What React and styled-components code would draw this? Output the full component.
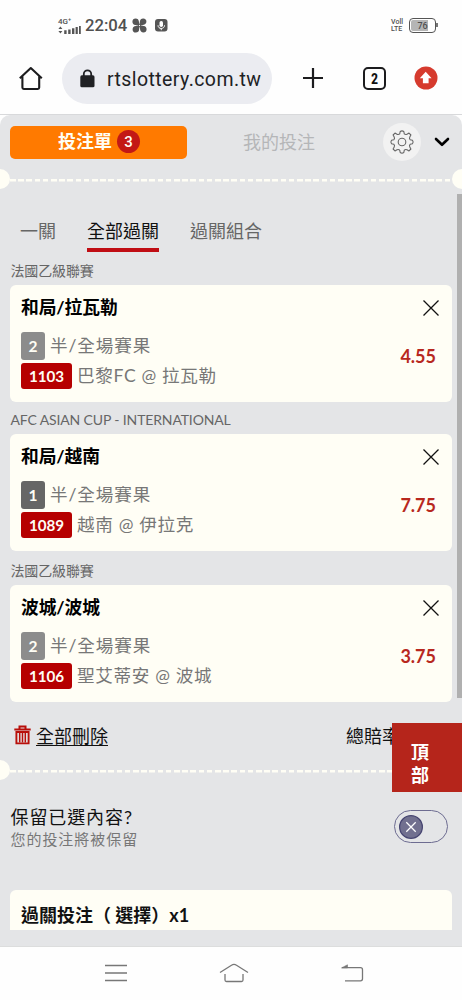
import React from "react";
import styled, { createGlobalStyle } from "styled-components";

const bets = [
  {
    league: "法國乙級聯賽",
    pick: "和局/拉瓦勒",
    leg: "2",
    code: "1103",
    match: "巴黎FC @ 拉瓦勒",
    odds: "4.55",
    gap: 28
  },
  {
    league: "AFC ASIAN CUP - INTERNATIONAL",
    pick: "和局/越南",
    leg: "1",
    dark: true,
    code: "1089",
    match: "越南 @ 伊拉克",
    odds: "7.75",
    gap: 32
  },
  {
    league: "法國乙級聯賽",
    pick: "波城/波城",
    leg: "2",
    code: "1106",
    match: "聖艾蒂安 @ 波城",
    odds: "3.75",
    gap: 34
  }
];

const StatusIcons = () => (
  <Status>
    <Signal>
      <span>4G⁺</span>
      <svg width="24" height="8" viewBox="0 0 24 8" fill="#555">
        <path d="M.4 3L2.4 .6L4.4 3zM.4 5L2.4 7.4L4.4 5z" />
        <path d="M6.2 4.2h2.4V8H6.2zM10.2 3.4h2.4V8h-2.4zM14 2.2h2.4V8H14zM17.6 .9h2.2V8h-2.2zM21 0h1.8v8H21z" />
      </svg>
    </Signal>
    <Clock>22:04</Clock>
    <svg width="15" height="15" viewBox="0 0 15 15">
      <g fill="#555">
        <path d="M.4 3.8Q.6 .6 3.6 .6Q6.6 .6 7 4Q7.2 6 8.6 6.8Q5.5 7.4 3.2 7.1Q.6 6.8 .4 3.8z" />
        <path d="M11.2 .4Q14.4 .6 14.4 3.6Q14.4 6.6 11 7Q9 7.2 8.2 8.6Q7.6 5.5 7.9 3.2Q8.2 .6 11.2 .4z" />
        <path d="M14.6 11.2Q14.4 14.4 11.4 14.4Q8.4 14.4 8 11Q7.8 9 6.4 8.2Q9.5 7.6 11.8 7.9Q14.4 8.2 14.6 11.2z" />
        <path d="M3.8 14.6Q.6 14.4 .6 11.4Q.6 8.4 4 8Q6 7.8 6.8 6.4Q7.4 9.5 7.1 11.8Q6.8 14.4 3.8 14.6z" />
      </g>
    </svg>
    <MicIcon width="13" height="13" viewBox="0 0 13 13">
      <rect width="12.5" height="12.5" rx="3" fill="#555" />
      <rect x="4.5" y="2" width="3.5" height="6" rx="1.7" fill="#fff" />
      <path d="M3 6.3C3 10.5 9.5 10.5 9.5 6.3M6.25 9.4v1.8" fill="none" stroke="#fff" />
    </MicIcon>
    <Volte>
      <span>Voll</span>
      <span>LTE</span>
    </Volte>
    <Battery>76</Battery>
  </Status>
);

const Toolbar = () => (
  <Bar>
    <svg width="24" height="26" viewBox="0 0 24 26" fill="none" stroke="#1c1c1e" strokeWidth="2.1">
      <path d="M.8 13.2L11.8 3L22.8 13.2M3.4 11V22.6Q3.4 24 4.8 24H18.8Q20.2 24 20.2 22.6V11" strokeLinejoin="round" />
    </svg>
    <Address>
      <svg width="15" height="19" viewBox="0 0 15 19">
        <path d="M3.8 8V5a3.7 3.7 0 0 1 7.4 0v3" fill="none" stroke="#202124" strokeWidth="1.8" />
        <rect x=".3" y="6.3" width="14.2" height="12" rx="1.6" fill="#202124" />
      </svg>
      <span>rtslottery.com.tw</span>
    </Address>
    <svg width="20" height="20" viewBox="0 0 20 20" stroke="#1c1c1e" strokeWidth="2.2">
      <path d="M0 10H20M10 0V20" />
    </svg>
    <TabCount>2</TabCount>
    <svg width="24" height="24" viewBox="0 0 24 24">
      <circle cx="12" cy="12" r="11.5" fill="#d63b2e" />
      <path d="M11.7 5.8L17.6 12.2H14.6V17.2H8.9V12.2H5.8z" fill="#fff" />
    </svg>
  </Bar>
);

const Gear = () => (
  <GearCircle>
    <svg width="26" height="26" viewBox="0 0 26 26" fill="none" stroke="#666" strokeWidth="1.1" strokeLinejoin="round">
      <circle cx="13" cy="13" r="3.8" />
      <path d="M11.2 2.5Q13 1.2 14.8 2.5L15.3 4.9Q16.5 6 18 5.2L20 4.1L21.9 6L20.8 8Q20 9.5 21.1 10.7L23.5 11.2Q24.8 13 23.5 14.8L21.1 15.3Q20 16.5 20.8 18L21.9 20L20 21.9L18 20.8Q16.5 20 15.3 21.1L14.8 23.5Q13 24.8 11.2 23.5L10.7 21.1Q9.5 20 8 20.8L6 21.9L4.1 20L5.2 18Q6 16.5 4.9 15.3L2.5 14.8Q1.2 13 2.5 11.2L4.9 10.7Q6 9.5 5.2 8L4.1 6L6 4.1L8 5.2Q9.5 6 10.7 4.9z" />
    </svg>
  </GearCircle>
);

const Bet = ({ bet }) => (
  <>
    <League $height={bet.gap}>{bet.league}</League>
    <Card>
      <CardHead>
        <span>{bet.pick}</span>
        <svg width="16" height="16" viewBox="0 0 16 16" stroke="#111" strokeWidth="1.3">
          <path d="M.5 .5L15.5 15.5M15.5 .5L.5 15.5" />
        </svg>
      </CardHead>
      <CardBody>
        <div>
          <Line>
            <Leg $dark={bet.dark}>{bet.leg}</Leg>
            <span>半/全場賽果</span>
          </Line>
          <Line $tight>
            <Code>{bet.code}</Code>
            <span>{bet.match}</span>
          </Line>
        </div>
        <Odds>{bet.odds}</Odds>
      </CardBody>
    </Card>
  </>
);

const App = () => {
  return (
    <Phone>
      <GlobalStyle />
      <StatusIcons />
      <Toolbar />
      <Page>
        <Slip>
          <SlipHead>
            <SlipTab>
              投注單<Count>3</Count>
            </SlipTab>
            <MyBets>我的投注</MyBets>
            <Gear />
            <svg width="16" height="10" viewBox="0 0 16 10" fill="none" stroke="#000" strokeWidth="2.6" strokeLinecap="round" strokeLinejoin="round">
              <path d="M2 2L8 7.8L14 2" />
            </svg>
          </SlipHead>
          <Perforation />
          <Tabs>
            <Tab>一關</Tab>
            <Tab $active>全部過關</Tab>
            <Tab>過關組合</Tab>
          </Tabs>
          {bets.map(bet => (
            <Bet key={bet.code} bet={bet} />
          ))}
          <Actions>
            <svg width="17" height="20" viewBox="0 0 17 20" fill="none" stroke="#b80f0a">
              <path d="M.3 4.4H16.7M5.5 3.7V1.5H11.5V3.7" strokeWidth="2" />
              <path d="M2.4 7H14.6V18.4H2.4z" strokeWidth="1.9" />
              <path d="M5.7 7.5V17.5M8.5 7.5V17.5M11.3 7.5V17.5" strokeWidth="1.5" />
            </svg>
            <u>全部刪除</u>
            <Total>總賠率</Total>
          </Actions>
          <Perforation />
          <Keep>
            <div>
              <KeepTitle>保留已選內容?</KeepTitle>
              <KeepNote>您的投注將被保留</KeepNote>
            </div>
            <Switch>
              <svg width="24" height="24" viewBox="0 0 23 23">
                <circle cx="11.5" cy="11.5" r="10.9" fill="#71708f" stroke="#464571" strokeWidth="1.2" />
                <path d="M7 7L16 16M16 7L7 16" stroke="#fff" strokeWidth="1.2" />
              </svg>
            </Switch>
          </Keep>
          <Stake>過關投注（ 選擇）x1</Stake>
          <ScrollThumb />
        </Slip>
        <TopButton>
          頂
          <br />部
        </TopButton>
      </Page>
      <NavBar>
        <svg width="22" height="18" viewBox="0 0 22 18">
          <path d="M0 1.5H22M0 9H22M0 16.5H22" />
        </svg>
        <svg width="30" height="20" viewBox="0 0 30 20">
          <path d="M1 9.5L12.5 2.2Q15 .7 17.5 2.2L29 9.5M6 11V17Q6 18.5 7.5 18.5H22.5Q24 18.5 24 17V11" />
        </svg>
        <svg width="23" height="18" viewBox="0 0 23 18">
          <path d="M1 3.7H19.5Q21.5 3.7 21.5 5.7V14.8Q21.5 16.8 19.5 16.8H4" />
          <path d="M.5 3.9L6.5 .8V3.9z" fill="#777" strokeWidth=".6" />
        </svg>
      </NavBar>
    </Phone>
  );
};

export default App;

const GlobalStyle = createGlobalStyle`
  * {
    box-sizing: border-box;
  }
  body {
    margin: 0;
    background: #fefefe;
  }
  svg {
    display: block;
    flex-shrink: 0;
  }
`;

const Phone = styled.div`
  width: 462px;
  height: 1000px;
  overflow: hidden;
  display: flex;
  flex-direction: column;
  background: #fefefe;
  color: #111;
  font-family: Lato, "Noto Sans CJK TC", sans-serif;
`;

const Status = styled.div`
  height: 51px;
  display: flex;
  align-items: center;
  padding: 0 26px 0 58px;
  font-family: Roboto, sans-serif;
  color: #505050;
`;

const Signal = styled.div`
  display: flex;
  flex-direction: column;
  width: 27px;
  font-size: 8px;
  font-weight: 500;
  line-height: 8px;
`;

const Clock = styled.div`
  width: 47px;
  font-size: 16.7px;
  font-weight: 500;
  line-height: 20px;
`;

const MicIcon = styled.svg`
  margin-left: 8px;
`;

const Volte = styled.div`
  margin-left: auto;
  margin-right: 6px;
  display: flex;
  flex-direction: column;
  font-size: 7px;
  font-weight: 500;
  line-height: 7px;
`;

const Battery = styled.div`
  position: relative;
  width: 27px;
  height: 15px;
  border: 1px solid #555;
  border-radius: 4px;
  background: linear-gradient(90deg, #b5b5b5 74%, #fefefe 74%);
  background-clip: content-box;
  padding: 1px;
  text-align: center;
  font-size: 9px;
  font-weight: 500;
  line-height: 12px;
  &::after {
    content: "";
    position: absolute;
    right: -3px;
    top: 4px;
    width: 2px;
    height: 4px;
    background: #777;
  }
`;

const Bar = styled.div`
  height: 64px;
  display: flex;
  align-items: center;
  padding: 0 24px 9px 19px;
  border-bottom: 1px solid #d8d9db;
  font-family: Roboto, sans-serif;
`;

const Address = styled.div`
  width: 210px;
  height: 51px;
  margin: 0 31px 0 19px;
  padding: 0 0 0 18px;
  display: flex;
  align-items: center;
  border-radius: 26px;
  background: #ebecf1;
  color: #202124;
  font-size: 19.5px;
  letter-spacing: 0.42px;
  span {
    margin-left: 12px;
    padding-top: 2px;
  }
`;

const TabCount = styled.div`
  width: 23px;
  height: 23px;
  margin: 0 28px 0 40px;
  border: 2px solid #1c1c1e;
  border-radius: 5px;
  text-align: center;
  font-family: "Roboto Condensed", Roboto, sans-serif;
  font-size: 14px;
  font-weight: 700;
  line-height: 20px;
`;

const Page = styled.div`
  position: relative;
  height: 832px;
  background: #fefefe;
`;

const Slip = styled.div`
  height: 832px;
  overflow: hidden;
  border-radius: 10px 10px 0 0;
  border-bottom: 1px solid #dcdddd;
  background: #e4e5e7;
`;

const SlipHead = styled.div`
  height: 54px;
  padding: 0 12px 0 10px;
  display: flex;
  align-items: center;
`;

const SlipTab = styled.div`
  width: 177px;
  height: 33px;
  padding-left: 1px;
  display: flex;
  align-items: center;
  justify-content: center;
  border-radius: 5px;
  background: #ff7a00;
  color: #fffef5;
  font-size: 18px;
  font-weight: 700;
  line-height: 30px;
  padding-bottom: 2px;
`;

const Count = styled.span`
  width: 23px;
  height: 23px;
  margin: 1px 0 0 5px;
  border-radius: 50%;
  background: #c31815;
  text-align: center;
  font-family: Roboto, sans-serif;
  font-size: 15px;
  font-weight: 500;
  line-height: 24px;
`;

const MyBets = styled.div`
  flex: 1;
  padding: 0 12px 3px 0;
  text-align: center;
  color: #b5b6b8;
  font-size: 18px;
`;

const GearCircle = styled.div`
  width: 38px;
  height: 38px;
  margin-right: 13px;
  display: flex;
  align-items: center;
  justify-content: center;
  border-radius: 50%;
  background: #f2f2f2;
`;

const Perforation = styled.div`
  height: 20px;
  display: flex;
  align-items: center;
  justify-content: space-between;
  background: repeating-linear-gradient(90deg, #fffef5 0 5.6px, transparent 5.6px 8.2px) 10px 10px / 100% 2.5px no-repeat;
  &::before,
  &::after {
    content: "";
    width: 10px;
    height: 20px;
    background: #fffef5;
    border-radius: 0 10px 10px 0;
  }
  &::after {
    border-radius: 10px 0 0 10px;
  }
`;

const Tabs = styled.div`
  height: 68px;
  padding: 30px 20px 0;
  display: flex;
  align-items: flex-start;
  gap: 31px;
`;

const Tab = styled.div`
  height: 33px;
  border-bottom: 4px solid ${props => (props.$active ? "#c00d14" : "transparent")};
  color: ${props => (props.$active ? "#111" : "#666")};
  font-size: 18px;
  line-height: 24px;
`;

const League = styled.div`
  height: ${props => props.$height}px;
  padding: 0 0 4px 10.5px;
  display: flex;
  align-items: flex-end;
  color: #666;
  font-size: 14px;
  letter-spacing: -0.14px;
  line-height: 20px;
`;

const Card = styled.div`
  height: 117px;
  width: 442px;
  margin-left: 10px;
  padding: 9px 13px 0 11px;
  border-radius: 6px;
  background: #fffef5;
`;

const CardHead = styled.div`
  height: 26px;
  display: flex;
  align-items: center;
  justify-content: space-between;
  color: #000;
  font-size: 17.8px;
  font-weight: 700;
  letter-spacing: -0.1px;
  line-height: 26px;
  svg {
    margin-top: 2px;
  }
`;

const CardBody = styled.div`
  padding: 11px 3px 0 0;
  display: flex;
  justify-content: space-between;
  align-items: flex-start;
`;

const Line = styled.div`
  height: 30px;
  display: flex;
  align-items: center;
  gap: 5px;
  color: #777;
  font-size: 17.6px;
  letter-spacing: ${props => (props.$tight ? 0.65 : 0.9)}px;
  line-height: 28px;
`;

const Leg = styled.span`
  width: 24px;
  height: 28px;
  border-radius: 3px;
  background: ${props => (props.$dark ? "#666" : "#8c8c8c")};
  color: #fffef5;
  text-align: center;
  font-size: 15.5px;
  font-weight: 700;
  letter-spacing: 0;
`;

const Code = styled(Leg)`
  width: 51px;
  height: 26px;
  background: #b60000;
  font-size: 15.2px;
  line-height: 26px;
`;

const Odds = styled.div`
  margin-top: 13px;
  color: #b8281e;
  font-size: 18px;
  font-weight: 700;
  line-height: 24px;
`;

const Actions = styled.div`
  height: 58px;
  padding: 8px 0 0 14px;
  display: flex;
  align-items: center;
  color: #111;
  font-size: 18px;
  u {
    margin-left: 5px;
    text-underline-offset: 2px;
    text-decoration-thickness: 1px;
  }
`;

const Total = styled.div`
  margin-left: auto;
  width: 116px;
`;

const Keep = styled.div`
  height: 110px;
  padding: 26px 14px 0 10.5px;
  display: flex;
  justify-content: space-between;
  align-items: flex-start;
`;

const KeepTitle = styled.div`
  font-size: 18px;
  letter-spacing: 0.9px;
  line-height: 23px;
`;

const KeepNote = styled.div`
  color: #777;
  font-size: 15px;
  letter-spacing: 0.95px;
  line-height: 20px;
`;

const Switch = styled.div`
  width: 54px;
  height: 33px;
  margin-top: 4px;
  padding-left: 4px;
  display: flex;
  align-items: center;
  border: 1.4px solid #6d6c91;
  border-radius: 17px;
`;

const Stake = styled.div`
  width: 442px;
  height: 40px;
  margin-left: 10px;
  padding: 13px 0 0 11px;
  border-radius: 6px 6px 0 0;
  background: #fffef5;
  color: #111;
  font-size: 18px;
  font-weight: 700;
  line-height: 24px;
`;

const ScrollThumb = styled.div`
  position: absolute;
  right: 0;
  top: 79px;
  width: 5px;
  height: 504px;
  background: #b0b0b0;
`;

const TopButton = styled.div`
  position: absolute;
  right: 0;
  top: 608px;
  width: 70px;
  height: 69px;
  padding: 18px 0 0 19px;
  background: #b5251b;
  color: #fff;
  font-size: 18px;
  font-weight: 700;
  line-height: 23px;
`;

const NavBar = styled.div`
  height: 53px;
  display: flex;
  justify-content: space-between;
  align-items: center;
  padding: 0 98px 1px 105px;
  svg {
    fill: none;
    stroke: #777;
    stroke-width: 1.3;
  }
`;
